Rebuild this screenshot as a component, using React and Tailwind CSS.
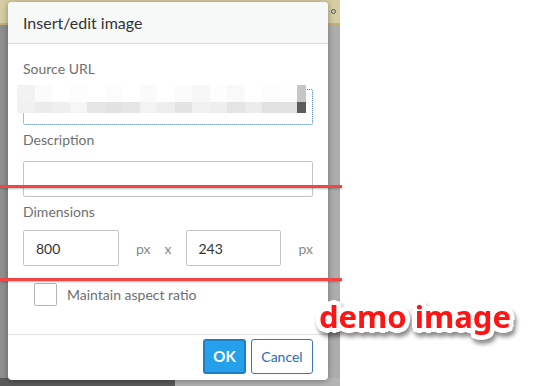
import React from 'react';

const mosaicTop = ['#f2f2f2', '#fbfbfb', '#ffffff', '#fdfdfd', '#ffffff', '#fcfcfc', '#ffffff', '#fafafa', '#ffffff', '#fbfbfb', '#f7f7f7', '#fdfdfd', '#f9f9f9', '#ffffff', '#fcfcfc', '#fefefe', '#c6c6c6'];
const mosaicBottom = ['#f0f0f0', '#ebebeb', '#efefef', '#f6f6f6', '#e6e6e6', '#e2e2e2', '#e6e6e6', '#f3f3f3', '#ededed', '#e3e3e3', '#f1f1f1', '#eeeeee', '#e4e4e4', '#ececec', '#e1e1e1', '#e2e2e2', '#5b5b5b'];

function Field({ label, children }) {
  return (
    <div className="flex flex-col">
      <div className="text-[14px] leading-5 text-[#6f6f6f]">{label}</div>
      {children}
    </div>
  );
}

export default function App() {
  return (
    <div className="w-[535px] h-[386px] bg-white relative overflow-hidden font-['Lato','Noto_Sans',sans-serif]">
      {/* dimmed page behind the dialog */}
      <div className="w-[340px] h-[386px] bg-[#adadad] flex flex-col">
        <div className="h-[25px] bg-[#d5cda3] border-b-2 border-[#c1b27a] flex justify-end items-center pr-1">
          <span className="w-[5px] h-[5px] rounded-full border border-[#555]" />
        </div>
        <div className="flex-1 flex">
          <div className="w-[8px] bg-[#8f8f8f]" />
          <div className="flex-1" />
        </div>
        <div className="h-[8px] flex">
          <div className="w-[175px] bg-[#5a5a5a] rounded-tr" />
          <div className="flex-1 bg-[#b3b3b3]" />
        </div>
      </div>

      {/* dialog */}
      <div className="absolute left-[8px] top-[2px] w-[320px] h-[378px] bg-white rounded-[4px] shadow-[0_1px_6px_rgba(0,0,0,0.35)] flex flex-col overflow-hidden">
        <div className="h-[42px] shrink-0 bg-[#f7f8f8] border-b border-[#dcdcdc] flex items-center px-[15px] pt-[1px] text-[16px] text-[#333]">
          Insert/edit image
        </div>

        <div className="flex-1 flex flex-col px-[15px] pt-[15px]">
          <Field label="Source URL">
            <div className="relative mt-[10px]">
              <div className="h-9 border border-dotted border-[#3b7cc4] rounded-[2px]" />
              <div className="absolute left-[-6px] top-[-4px] flex flex-col">
                <div className="flex">
                  {mosaicTop.map((c, i) => (
                    <div key={i} className={i === 16 ? 'w-[9px] h-[17px]' : 'w-[17.5px] h-[17px]'} style={{ background: c }} />
                  ))}
                </div>
                <div className="flex">
                  {mosaicBottom.map((c, i) => (
                    <div key={i} className={i === 16 ? 'w-[9px] h-[11px]' : 'w-[17.5px] h-[11px]'} style={{ background: c }} />
                  ))}
                </div>
              </div>
            </div>
          </Field>

          <div className="mt-[5px]">
            <Field label="Description">
              <div className="mt-[11px] h-9 border border-[#c4c4c4] rounded-[2px]" />
            </Field>
          </div>

          <div className="mt-[5px]">
            <Field label="Dimensions">
              <div className="mt-[8px] flex items-center text-[14px]">
                <div className="w-[96px] h-9 border border-[#c4c4c4] rounded-[2px] flex items-center px-3 text-[#333]">800</div>
                <span className="ml-[17px] text-[#8a8a8a]">px</span>
                <span className="ml-[14px] text-[#8a8a8a]">x</span>
                <div className="ml-[14px] w-[96px] h-9 border border-[#c4c4c4] rounded-[2px] flex items-center px-3 text-[#333]">243</div>
                <span className="ml-[17px] text-[#8a8a8a]">px</span>
              </div>
            </Field>
          </div>

          <div className="mt-[17px] ml-[11px] flex items-center">
            <div className="w-[23px] h-[23px] border border-[#b5b5b5] rounded-[2px] bg-white" />
            <span className="ml-[10px] text-[14px] text-[#6f6f6f]">Maintain aspect ratio</span>
          </div>
        </div>

        <div className="h-[46px] shrink-0 border-t border-[#e3e3e3] flex justify-end items-start pt-[4px] pr-[15px] gap-[5px]">
          <button className="w-[43px] h-[35px] rounded-[3px] bg-[#25a0ea] border-2 border-[#1f7ec0] text-white font-bold text-[15px]">OK</button>
          <button className="w-[62px] h-[35px] rounded-[3px] bg-white border border-[#3a77b8] text-[#2b6cb0] text-[14px]">Cancel</button>
        </div>
      </div>

      {/* annotation lines */}
      <div className="absolute left-0 top-[185px] w-[342px] h-[3px] bg-[#f24545] shadow-[0_1px_2px_rgba(0,0,0,0.25)]" />
      <div className="absolute left-0 top-[278px] w-[342px] h-[3px] bg-[#f24545] shadow-[0_1px_2px_rgba(0,0,0,0.25)]" />

      {/* annotation label */}
      <div className="absolute left-[319px] top-[296px] [filter:drop-shadow(2px_4px_2px_rgba(0,0,0,0.45))]">
        <div className="text-[31px] leading-[40px] font-bold text-[#ff1414] font-['Noto_Sans',sans-serif] [text-shadow:5px_0_0_#fff,-5px_0_0_#fff,0_5px_0_#fff,0_-5px_0_#fff,4px_3px_0_#fff,-4px_-3px_0_#fff,4px_-3px_0_#fff,-4px_3px_0_#fff,3px_4px_0_#fff,-3px_-4px_0_#fff,3px_-4px_0_#fff,-3px_4px_0_#fff]">
          demo image
        </div>
      </div>
    </div>
  );
}
